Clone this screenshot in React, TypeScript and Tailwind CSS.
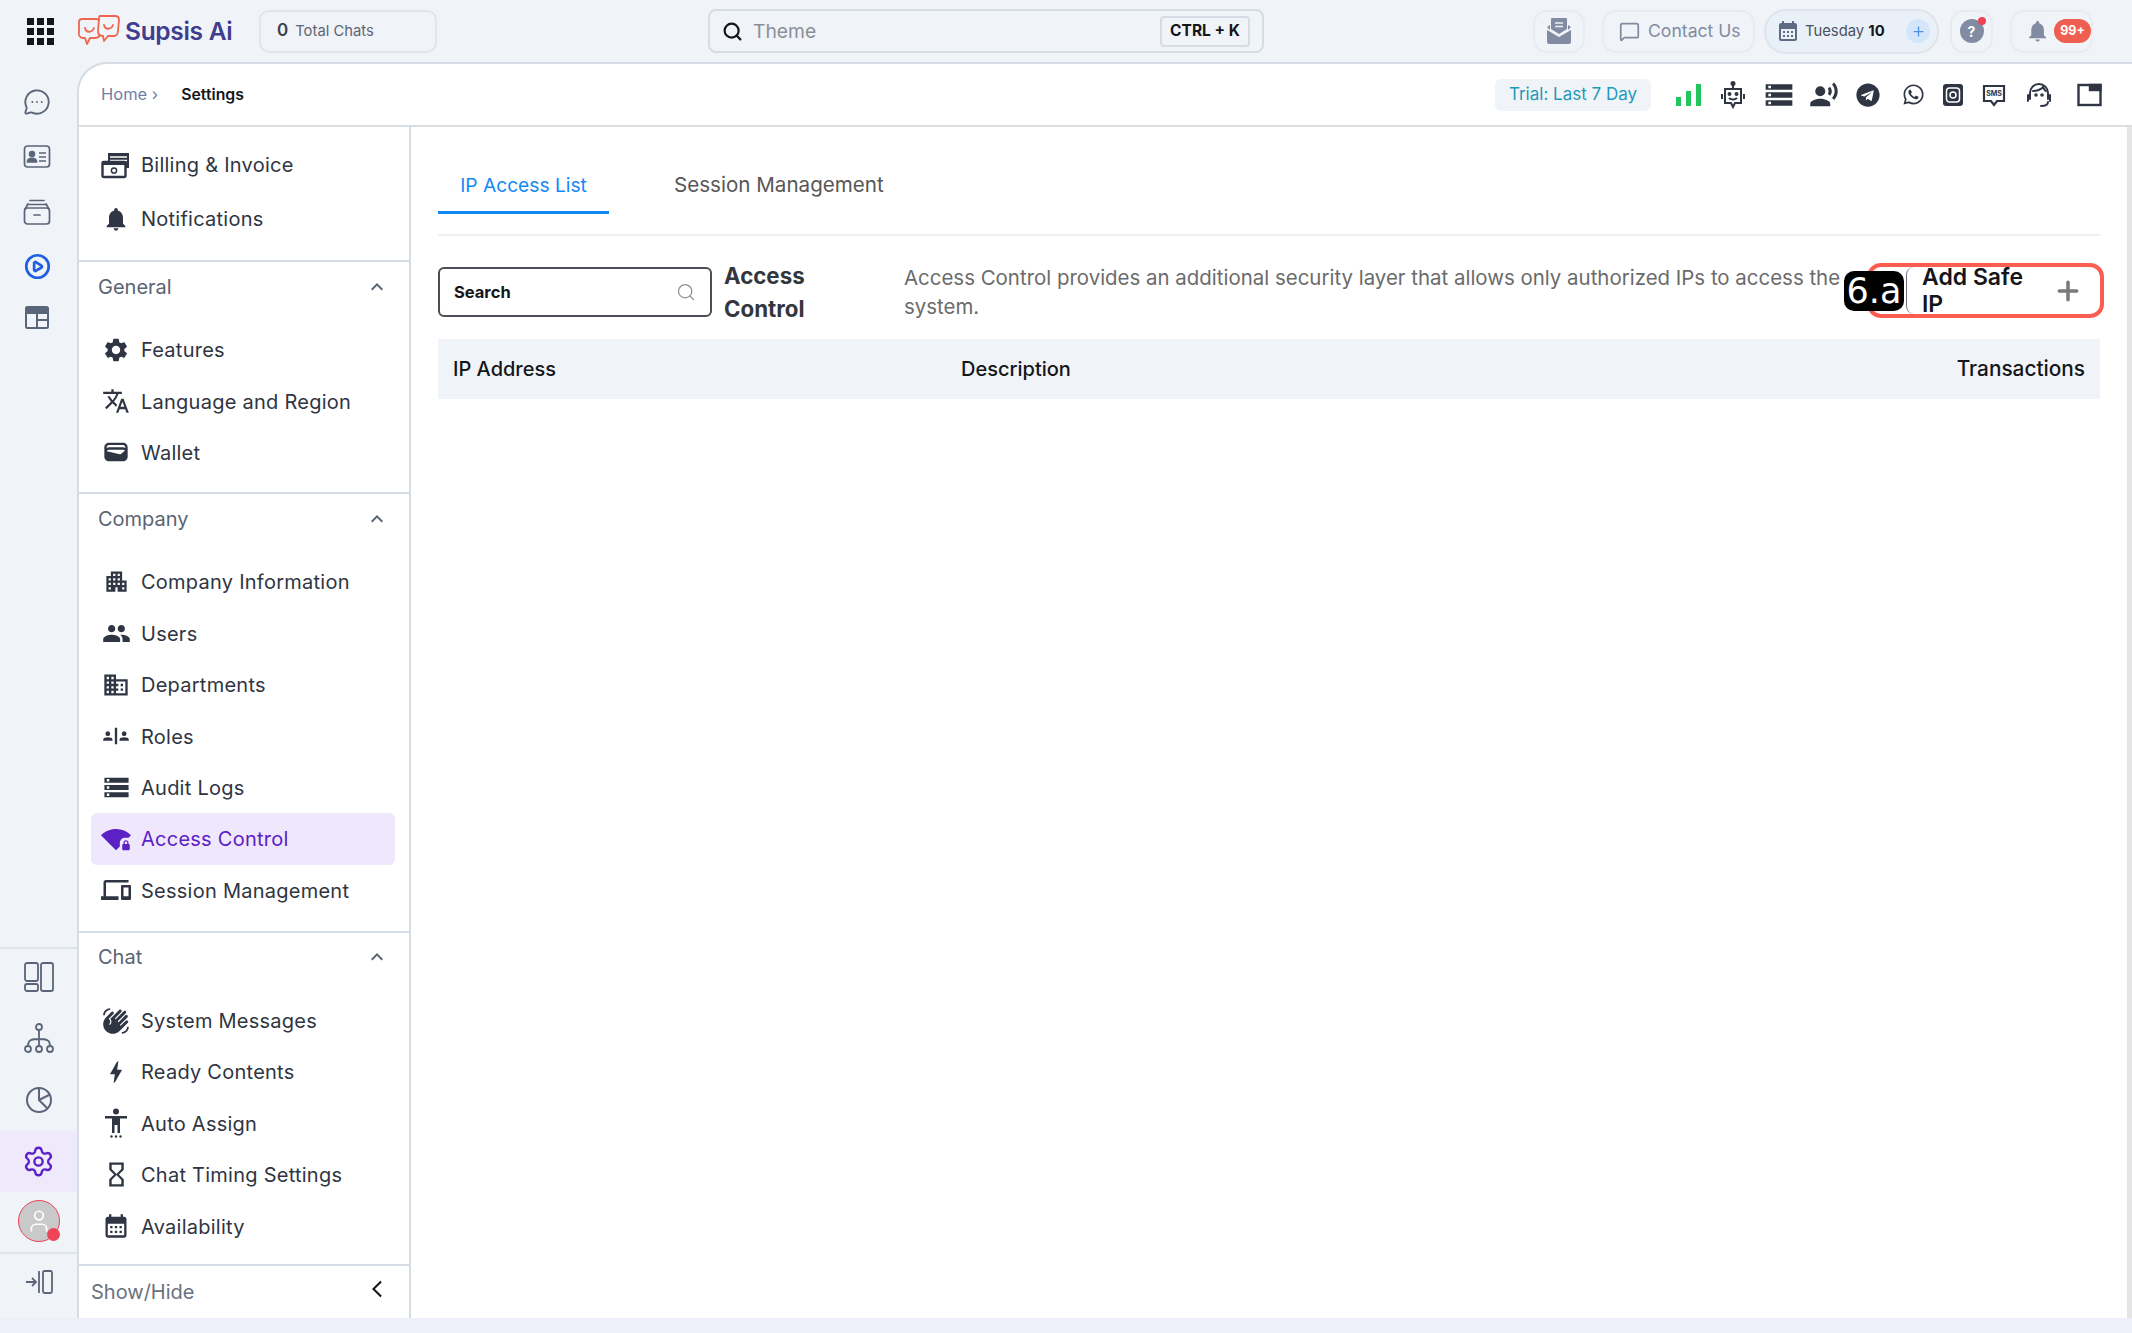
import React from "react";
import {
  MdNotifications, MdSettings, MdTranslate, MdWallet, MdApartment, MdPeople, MdOutlineDomain, MdSafetyDivider,
  MdStorage, MdWifiLock, MdOutlineDevices, MdWavingHand, MdBolt, MdOutlineHourglassEmpty,
  MdCalendarMonth, MdKeyboardArrowUp, MdArrowBackIosNew, MdRecordVoiceOver,
} from "react-icons/md";
import { FaTelegram, FaWhatsapp } from "react-icons/fa";
import { Settings, MessageCircleMore, CirclePlay, MessageSquare, Search, Plus, User } from "lucide-react";

const Billing = () => (
  <svg width="30" height="28" viewBox="0 0 30 28" fill="none">
    <path d="M7 2h21v15H7z" fill="#2f3542" />
    <path d="M9 6h17M9 9.500h17" stroke="#fff" strokeWidth="1.400" />
    <rect x="1.500" y="11" width="23" height="15" rx="1.500" fill="#fff" stroke="#2f3542" strokeWidth="2.400" />
    <rect x="1" y="10" width="24" height="4" fill="#2f3542" />
    <circle cx="13" cy="19.500" r="2.600" stroke="#2f3542" strokeWidth="1.500" />
  </svg>
);

const AutoAssign = () => (
  <svg width="28" height="30" viewBox="0 0 28 30" fill="#2f3542">
    <circle cx="14" cy="3.500" r="3" />
    <path d="M3 8h22v2.600h-7V25h-2.500v-8h-3v8H10V10.600H3z" />
    <circle cx="9.500" cy="28.500" r="1.200" /><circle cx="14" cy="28.500" r="1.200" /><circle cx="18.500" cy="28.500" r="1.200" />
  </svg>
);

type Row = { label: string; icon: React.ReactNode; active?: boolean };
const ic = "text-[#2f3542]";
const general: Row[] = [
  { label: "Features", icon: <MdSettings size={28} className={ic} /> },
  { label: "Language and Region", icon: <MdTranslate size={28} className={ic} /> },
  { label: "Wallet", icon: <MdWallet size={28} className={ic} /> },
];
const company: Row[] = [
  { label: "Company Information", icon: <MdApartment size={27} className={ic} /> },
  { label: "Users", icon: <MdPeople size={29} className={ic} /> },
  { label: "Departments", icon: <MdOutlineDomain size={28} className={ic} /> },
  { label: "Roles", icon: <MdSafetyDivider size={28} className={ic} /> },
  { label: "Audit Logs", icon: <MdStorage size={29} className={ic} /> },
  { label: "Access Control", icon: <MdWifiLock size={30} className="text-[#5b21c4]" />, active: true },
  { label: "Session Management", icon: <MdOutlineDevices size={30} className={ic} /> },
];
const chat: Row[] = [
  { label: "System Messages", icon: <MdWavingHand size={28} className={ic} /> },
  { label: "Ready Contents", icon: <MdBolt size={28} className={ic} /> },
  { label: "Auto Assign", icon: <AutoAssign /> },
  { label: "Chat Timing Settings", icon: <MdOutlineHourglassEmpty size={29} className={ic} /> },
  { label: "Availability", icon: <MdCalendarMonth size={28} className={ic} /> },
];

function NavRow({ label, icon, active }: Row) {
  return (
    <div className={`ml-[12px] mr-[14px] flex h-[51.4px] items-center rounded-[6px] ${active ? "bg-[#efe7fc] text-[#5b21c4]" : "text-[#2f3542]"}`}>
      <span className="ml-[10px] flex w-[30px] justify-center">{icon}</span>
      <span className="ml-[10px] whitespace-nowrap pt-[1px] text-[20px] tracking-[0.25px]">{label}</span>
    </div>
  );
}

function Section({ title, rows, pb }: { title: string; rows: Row[]; pb: string }) {
  return (
    <div className={`border-t-2 border-[#d5dce5] ${pb}`}>
      <div className="flex h-[50px] items-center justify-between pb-[1px] pl-[19px] pr-[20px] text-[20px] text-[#5b6472]">
        <span>{title}</span>
        <MdKeyboardArrowUp size={24} className="text-[#5b6472]" />
      </div>
      <div className="mt-[12px]">
        {rows.map((r) => (
          <NavRow key={r.label} {...r} />
        ))}
      </div>
    </div>
  );
}

const Logo = () => (
  <svg width="44" height="36" viewBox="0 0 44 36" fill="none" stroke="#f0654e" strokeWidth="1.800" strokeLinejoin="round" strokeLinecap="round">
    <path d="M5 6h14c3 0 4 2 4 4v10c0 3-2 5-5 5h-5l-3 6-2-6H6c-3 0-5-3-4-6L2 9c0-2 1-3 3-3z" />
    <path d="M23 3h15c3 0 4 2 4 4l-1 11c0 3-2 5-4 5h-6l-4 5-1-5c-4 0-5-3-5-5l1-12c0-2 0-3 1-3z" fill="#f2f5f9" />
    <path d="M8 15c1 5 7 5 9 0M27 12c1 5 7 5 9 0" />
  </svg>
);

const Grid9 = () => (
  <div className="grid grid-cols-3 gap-[3px]">
    {Array.from({ length: 9 }).map((_, i) => (
      <span key={i} className="h-[7px] w-[7px] bg-[#15171c]" />
    ))}
  </div>
);

const MailOpen = () => (
  <svg width="26" height="28" viewBox="0 0 26 28" fill="#818ca3">
    <path d="M6 1h14a1 1 0 0 1 1 1v10l-8 5-8-5V2a1 1 0 0 1 1-1z" />
    <path d="M9 6h8M9 9.500h8" stroke="#eef1f5" strokeWidth="1.600" />
    <path d="M1 10l3-2v5zM25 10l-3-2v5zM1 13l12 7 12-7v12a2 2 0 0 1-2 2H3a2 2 0 0 1-2-2z" />
  </svg>
);

const TopBar = () => (
  <div className="flex h-[62px] items-center">
    <div className="ml-[27px]"><Grid9 /></div>
    <div className="ml-[23px]"><Logo /></div>
    <span className="ml-[4px] w-[134px] text-[24.500px] font-semibold tracking-[-0.3px] text-[#3f3d8f]">Supsis Ai</span>
    <div className="flex h-[43px] w-[178px] items-center rounded-[10px] border-2 border-[#e1e6ec]">
      <span className="ml-[16px] text-[17px] font-semibold text-[#3a414d]">0</span>
      <span className="ml-[7px] text-[14.800px] text-[#5d6673]">Total Chats</span>
    </div>
    <div className="ml-[271px] flex h-[44px] w-[556px] items-center rounded-[8px] border-2 border-[#d5dce5]">
      <Search size={21} strokeWidth={2.500} className="ml-[12px] text-[#14161a]" />
      <span className="ml-[10px] pt-[1px] text-[19.300px] text-[#8a8f99]">Theme</span>
      <span className="ml-auto mr-[12px] flex h-[31px] w-[90px] items-center justify-center rounded-[4px] border-2 border-[#d5dce5] text-[15.500px] font-bold text-[#14161a]">CTRL + K</span>
    </div>
    <div className="ml-[269px] flex h-[43px] w-[52px] items-center justify-center rounded-[14px] border-2 border-[#e8ecf1]">
      <MailOpen />
    </div>
    <div className="ml-[17px] flex h-[43px] w-[153px] items-center rounded-[14px] border-2 border-[#e8ecf1] text-[#818ca3]">
      <MessageSquare size={21} className="ml-[15px]" />
      <span className="ml-[8px] whitespace-nowrap text-[17.600px]">Contact Us</span>
    </div>
    <div className="ml-[9px] flex h-[45px] w-[175px] items-center rounded-[22px] border-2 border-[#dfe4ec] bg-[#eaf0f8]">
      <MdCalendarMonth size={24} className="ml-[10px] text-[#5f6b85]" />
      <span className="ml-[5px] whitespace-nowrap text-[14.800px] text-[#4a5160]">Tuesday <b className="font-bold text-[#14161a]">10</b></span>
      <span className="ml-auto mr-[7px] flex h-[24px] w-[24px] items-center justify-center rounded-full bg-[#d6e6fa]">
        <Plus size={15} className="text-[#4d8fe6]" />
      </span>
    </div>
    <div className="relative ml-[11px] flex h-[43px] w-[43px] items-center justify-center rounded-[14px] border-2 border-[#e8ecf1]">
      <span className="flex h-[24px] w-[24px] items-center justify-center rounded-full bg-[#818ca3] text-[14px] font-bold text-white">?</span>
      <span className="absolute right-[5px] top-[5px] h-[8px] w-[8px] rounded-full bg-[#ef4458]" />
    </div>
    <div className="ml-[17px] flex h-[43px] w-[83px] items-center rounded-[14px] border-2 border-[#e8ecf1]">
      <MdNotifications size={26} className="ml-[13px] text-[#818ca3]" />
      <span className="ml-[4px] flex h-[24px] w-[38px] items-center justify-center rounded-[12px] bg-[#ee5f52] text-[12.500px] font-bold text-white">99+</span>
    </div>
  </div>
);

const d = "#2f3542";
const ToolIcons = () => (
  <div className="flex items-center">
    <svg width="26" height="22" viewBox="0 0 26 22" className="ml-[25px]" fill="#22c55e">
      <rect x="0" y="13" width="5" height="9" /><rect x="10" y="7" width="5" height="15" /><rect x="20" y="0" width="5" height="22" />
    </svg>
    <svg width="26" height="28" viewBox="0 0 26 28" className="ml-[18px]" fill="none" stroke={d} strokeWidth="2">
      <circle cx="13" cy="2.500" r="1.500" fill={d} /><path d="M13 4v4" /><path d="M5 8h16v14h-6l-2 4-2-4H5z" /><path d="M2 13v5M24 13v5" />
      <circle cx="9.500" cy="13" r="1" fill={d} /><circle cx="16.500" cy="13" r="1" fill={d} /><path d="M9 17c2 2 6 2 8 0" />
    </svg>
    <MdStorage size={32} className="ml-[17px] text-[#2f3542]" />
    <MdRecordVoiceOver size={30} className="ml-[14px] text-[#2f3542]" />
    <FaTelegram size={24} className="ml-[17px] text-[#2f3542]" />
    <FaWhatsapp size={23} className="ml-[22px] text-[#2f3542]" />
    <svg width="22" height="26" viewBox="0 0 22 26" className="ml-[17px]" fill="none" stroke={d}>
      <rect x="1" y="2" width="20" height="22" rx="3" fill={d} strokeWidth="0" />
      <rect x="4.500" y="6" width="13" height="14" rx="3" stroke="#fff" strokeWidth="1.500" />
      <circle cx="11" cy="13" r="3" stroke="#fff" strokeWidth="1.500" />
    </svg>
    <svg width="24" height="24" viewBox="0 0 24 24" className="ml-[18px]">
      <path d="M2 3h20v15h-7l-3 4-3-4H2z" fill="none" stroke={d} strokeWidth="2.200" />
      <text x="12" y="13" textAnchor="middle" fontSize="7" fontWeight="700" fill={d} fontFamily="Inter, sans-serif">SMS</text>
    </svg>
    <svg width="26" height="30" viewBox="0 0 26 30" className="ml-[20px]" fill="none" stroke={d} strokeWidth="2" strokeLinecap="round">
      <path d="M4 19v-6a9 9 0 0 1 18 0v6" /><path d="M7 11c4 0 9-2 10-4 1 2 2 4 3 4" /><circle cx="10" cy="15" r=".8" fill={d} /><circle cx="16" cy="15" r=".8" fill={d} />
      <path d="M2 15v6M24 15v6M22 22c0 3-3 4-7 4" />
    </svg>
    <svg width="25" height="24" viewBox="0 0 25 24" className="ml-[25px] mr-[30px]" fill="none" stroke={d} strokeWidth="2.400">
      <rect x="1.500" y="2" width="22" height="20" /><rect x="13" y="2" width="10.500" height="5" fill={d} />
    </svg>
  </div>
);

const railIcon = "text-[#5b6579]";
const s = "#5b6579";
const Rail = () => (
  <div className="flex w-[77px] flex-col justify-between">
    <div className="flex flex-col items-center gap-[27px] pr-[3px] pt-[26px]">
      <MessageCircleMore size={28} strokeWidth={1.600} className={railIcon} />
      <svg width="28" height="28" viewBox="0 0 28 28" fill="none" stroke={s} strokeWidth="1.700">
        <rect x="1.500" y="3" width="25" height="21" rx="3" />
        <circle cx="9" cy="11" r="2.400" fill={s} /><path d="M4.500 19c0-5 9-5 9 0z" fill={s} /><path d="M16 10h7M16 14h7M16 18h7" />
      </svg>
      <svg width="28" height="28" viewBox="0 0 28 28" fill="none" stroke={s} strokeWidth="1.700" strokeLinecap="round">
        <path d="M7 2.500h14M4.500 6.500h19" />
        <rect x="1.500" y="10" width="25" height="16" rx="3" /><path d="M2 11l3-5M26 11l-3-5M11 17h6" />
      </svg>
      <CirclePlay size={27} strokeWidth={2.400} className="text-[#1f5fe0]" />
      <svg width="26" height="26" viewBox="0 0 26 26" className="-mt-[2px]" fill="none" stroke={s} strokeWidth="2">
        <rect x="2" y="2" width="22" height="21" rx="1.500" /><path d="M2 5h22" strokeWidth="5" /><path d="M13 8v15M13 15h11M2 8h22" />
      </svg>
    </div>
    <div className="flex h-[371px] w-full flex-col items-center border-t-2 border-[#dfe4ea] pt-[13px]">
      <svg width="30" height="30" viewBox="0 0 30 30" fill="none" stroke={s} strokeWidth="1.800">
        <rect x="1" y="1" width="13" height="18" rx="2" /><rect x="1" y="22" width="13" height="7" rx="2" /><rect x="17" y="1" width="12" height="28" rx="2" />
      </svg>
      <svg width="30" height="30" viewBox="0 0 30 30" className="mt-[31px]" fill="none" stroke={s} strokeWidth="1.800">
        <circle cx="15" cy="4" r="3" /><circle cx="4" cy="26" r="3" /><circle cx="15" cy="26" r="3" /><circle cx="26" cy="26" r="3" />
        <path d="M15 7v16M4 23c0-6 3-7 11-7s11 1 11 7" />
      </svg>
      <svg width="26" height="26" viewBox="0 0 26 26" className="mt-[34px]" fill="none" stroke={s} strokeWidth="2">
        <circle cx="13" cy="13" r="12" /><path d="M13 1v12l8.500 8.500M13 13l10-5" />
      </svg>
      <div className="mt-[18px] flex h-[61px] w-full items-center justify-center bg-[#efe9fc]">
        <Settings size={33} strokeWidth={1.700} className="text-[#5b21c4]" />
      </div>
      <div className="relative mt-[8px] flex h-[42px] w-[42px] items-center justify-center rounded-full border border-[#ef4458] bg-[#c9c9c9]">
        <User size={26} strokeWidth={1.600} className="text-white" />
        <span className="absolute bottom-0 right-[-1px] h-[13px] w-[13px] rounded-full bg-[#ef4458]" />
      </div>
      <div className="mt-[10px] flex w-full flex-1 justify-center border-t-2 border-[#dfe4ea] pt-[16px]">
        <svg width="28" height="24" viewBox="0 0 28 24" fill="none" stroke={s} strokeWidth="1.800">
          <path d="M1 12h9M7 8l4 4-4 4" /><path d="M14 1v22" /><rect x="18" y="1" width="9" height="22" rx="1.500" />
        </svg>
      </div>
    </div>
  </div>
);

const Sidebar = () => (
  <div className="flex w-[332px] shrink-0 flex-col justify-between border-r-2 border-[#d5dce5]">
    <div>
      <div className="pb-[14px] pt-[11px]">
        <div className="ml-[12px] mr-[14px] flex h-[54px] items-center text-[#2f3542]">
          <span className="ml-[10px] flex w-[30px] justify-center"><Billing /></span>
          <span className="ml-[10px] text-[20px] tracking-[0.25px]">Billing &amp; Invoice</span>
        </div>
        <div className="ml-[12px] mr-[14px] flex h-[54px] items-center text-[#2f3542]">
          <span className="ml-[10px] flex w-[30px] justify-center"><MdNotifications size={28} className={ic} /></span>
          <span className="ml-[10px] text-[20px] tracking-[0.25px]">Notifications</span>
        </div>
      </div>
      <Section title="General" rows={general} pb="pb-[14px]" />
      <Section title="Company" rows={company} pb="pb-[15px]" />
      <Section title="Chat" rows={chat} pb="pb-[12px]" />
    </div>
    <div className="flex h-[54px] items-center justify-between border-t-2 border-[#d5dce5] pl-[12px] pr-[22px]">
      <span className="text-[20px] text-[#6a7280]">Show/Hide</span>
      <MdArrowBackIosNew size={20} className="mb-[6px] text-[#14161a]" />
    </div>
  </div>
);

const Main = () => (
  <div className="flex min-w-0 flex-1">
    <div className="min-w-0 flex-1 pl-[27px] pr-[27px]">
      <div className="flex h-[109px] items-end border-b-2 border-[#eef0f2]">
        <div className="mb-[20px] flex h-[65px] w-[171px] items-center justify-center border-b-[3px] border-[#1389f5] pt-[10px] text-[19.200px] text-[#1389f5]">IP Access List</div>
        <div className="mb-[20px] ml-[65px] flex h-[65px] items-center pt-[7px] text-[20.600px] text-[#575757]">Session Management</div>
      </div>
      <div className="mt-[31px] flex h-[50px] items-center">
        <div className="flex h-[50px] w-[274px] shrink-0 items-center justify-between rounded-[6px] border-2 border-[#4a4f57] pl-[14px] pr-[14px]">
          <span className="text-[16.500px] font-bold text-[#14161a]">Search</span>
          <Search size={20} strokeWidth={1.500} className="text-[#8a8f99]" />
        </div>
        <div className="ml-[12px] w-[180px] shrink-0 text-[22.300px] font-bold leading-[33px] text-[#33373d]">Access<br />Control</div>
        <div className="w-[938px] shrink-0 whitespace-nowrap text-[20.450px] leading-[29px] text-[#6b6b6b]">
          Access Control provides an additional security layer that allows only authorized IPs to access the<br />system.
        </div>
        <div className="relative mb-[3px] ml-[64px] flex h-[47px] w-[192px] shrink-0 items-center justify-between rounded-l-[8px] border-l border-[#6b7280] pl-[15px] pr-[15px]">
          <span className="text-[23px] font-semibold leading-[27px] text-[#14161a]">Add Safe<br />IP</span>
          <Plus size={30} strokeWidth={2.800} className="text-[#7a7a7a]" />
          <div className="pointer-events-none absolute left-[-40px] top-[-4px] h-[55px] w-[237px] rounded-[14px] border-[4px] border-[#fb5e50]" />
          <div className="absolute left-[-63px] top-[4px] flex h-[40px] w-[60px] items-center justify-center rounded-[10px] bg-black font-['DejaVu_Sans',sans-serif] text-[35px] text-white">6.a</div>
        </div>
      </div>
      <div className="mt-[22px] grid h-[60px] grid-cols-[508px_1fr_auto] items-center bg-[#f0f3f7] px-[15px] text-[20px] font-medium text-[#14161a]">
        <span>IP Address</span>
        <span>Description</span>
        <span className="text-[20.800px]">Transactions</span>
      </div>
    </div>
    <div className="w-[5px] shrink-0 bg-[#e5e5e5]" />
  </div>
);

export default function App() {
  return (
    <div className="flex h-[1333px] w-full flex-col overflow-hidden bg-[#f0f3f7] font-['Inter','Noto_Sans',sans-serif]">
      <TopBar />
      <div className="flex min-h-0 flex-1">
        <Rail />
        <div className="flex min-w-0 flex-1 flex-col rounded-tl-[30px] border-l-2 border-t-2 border-[#d5dce5] bg-white">
          <div className="flex h-[63px] shrink-0 items-center justify-between border-b-2 border-[#d9dee3]">
            <div className="flex items-center pl-[22px]">
              <span className="text-[16.500px] text-[#7180a8]">Home ›</span>
              <span className="ml-[23px] text-[15.800px] font-semibold text-[#14161a]">Settings</span>
            </div>
            <div className="flex items-center">
              <span className="flex h-[32px] w-[156px] items-center justify-center rounded-[6px] bg-[#f0f4f8] text-[17px] text-[#1e9ab8]">Trial: Last 7 Day</span>
              <ToolIcons />
            </div>
          </div>
          <div className="flex min-h-0 flex-1">
            <Sidebar />
            <Main />
          </div>
        </div>
      </div>
      <div className="h-[15px] shrink-0 bg-[#edf0f8]" />
    </div>
  );
}
